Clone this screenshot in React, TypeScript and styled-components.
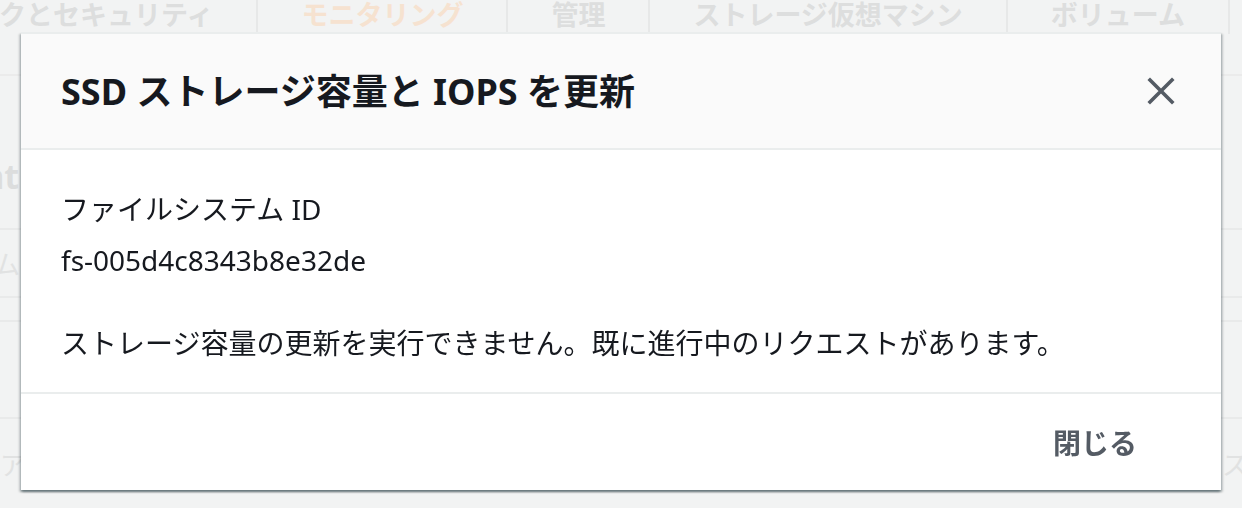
import * as React from "react";
import { FC } from "react";
import styled, { createGlobalStyle } from "styled-components";

const GlobalStyle = createGlobalStyle`
  html, body {
    margin: 0;
    padding: 0;
    width: 100%;
    height: 100%;
    overflow: hidden;
    background-color: #f2f3f3;
    font-family: "Noto Sans", "Noto Sans CJK JP", sans-serif;
  }
`;

/* 背景のページ（モーダルの後ろで薄く見えている部分） */
const Page = styled.div`
  width: 1242px;
  height: 508px;
  overflow: hidden;
  background-color: #f2f3f3;
`;

const TabBar = styled.div`
  display: flex;
  height: 76px;
  margin-left: -179px;
  border-bottom: 2px solid #ebebeb;
  box-sizing: border-box;
`;

const Tab = styled.div<{ active?: boolean }>`
  padding: 0 43px;
  height: 34px;
  line-height: 30px;
  font-size: 27px;
  font-weight: bold;
  white-space: nowrap;
  color: ${(p) => (p.active ? "#f6e2d0" : "#dddede")};
  border-right: 2px solid #e7e8e8;
`;

const SectionTitle = styled.div`
  display: flex;
  justify-content: flex-end;
  width: 19px;
  margin-top: 80px;
  height: 40px;
  font-size: 34px;
  line-height: 40px;
  font-weight: bold;
  white-space: nowrap;
  color: #dcdddd;
`;

const BgRow = styled.div<{ size: number }>`
  height: ${(p) => p.size}px;
  border-top: 2px solid #e9eaea;
  display: flex;
  justify-content: space-between;
  align-items: center;
  font-size: 26px;
  color: #e1e2e2;
`;

const BgCell = styled.span<{ alignEnd?: boolean }>`
  display: flex;
  justify-content: ${(p) => (p.alignEnd ? "flex-end" : "flex-start")};
  width: 20px;
  white-space: nowrap;
`;

const Rows = styled.div`
  margin-top: 32px;
`;

/* モーダル */
const Overlay = styled.div`
  position: fixed;
  inset: 0;
  display: flex;
  justify-content: center;
  align-items: flex-start;
  padding-top: 32px;
`;

const Dialog = styled.div`
  width: 1200px;
  background-color: #fff;
  border-top: 2px solid #eaeded;
  box-shadow: 0 2px 2px 0 rgba(0, 28, 36, 0.38),
    2px 2px 2px 0 rgba(0, 28, 36, 0.18), -2px 2px 2px 0 rgba(0, 28, 36, 0.18);
`;

const DialogHeader = styled.div`
  display: flex;
  align-items: center;
  justify-content: space-between;
  height: 114px;
  padding: 0 44px 0 40px;
  background-color: #fafafa;
  border-bottom: 2px solid #eaeded;
`;

const Title = styled.h2`
  margin: 0 0 4px 0;
  font-size: 36px;
  font-weight: bold;
  color: #16191f;
`;

const CloseButton = styled.button`
  width: 32px;
  height: 32px;
  padding: 0;
  border: none;
  background: none;
  display: flex;
  align-items: center;
  justify-content: center;
  cursor: pointer;
`;

const DialogBody = styled.div`
  padding: 37px 40px 27px 40px;
  color: #16191f;
  font-size: 28px;
`;

const Label = styled.div`
  line-height: 44px;
  margin-bottom: 7px;
`;

const Value = styled.div`
  line-height: 44px;
`;

const Message = styled.p`
  margin: 39px 0 0 0;
  line-height: 44px;
`;

const DialogFooter = styled.div`
  display: flex;
  justify-content: flex-end;
  align-items: center;
  height: 96px;
  padding: 0 44px;
  border-top: 2px solid #eaeded;
`;

const LinkButton = styled.button`
  padding: 0 40px;
  border: none;
  background: none;
  font-family: inherit;
  font-size: 28px;
  font-weight: bold;
  color: #545b64;
  cursor: pointer;
`;

const tabs = [
  { label: "ネットワークとセキュリティ", active: false },
  { label: "モニタリング", active: true },
  { label: "管理", active: false },
  { label: "ストレージ仮想マシン", active: false },
  { label: "ボリューム", active: false },
];

const CloseIcon: FC = () => (
  <svg width="28" height="28" viewBox="0 0 28 28">
    <path
      d="M3 3 L25 25 M25 3 L3 25"
      stroke="#545b64"
      strokeWidth="3.6"
      strokeLinecap="square"
      fill="none"
    />
  </svg>
);

const App: FC = () => {
  return (
    <>
      <GlobalStyle />
      <Page>
        <TabBar>
          {tabs.map((t) => (
            <Tab key={t.label} active={t.active}>
              {t.label}
            </Tab>
          ))}
        </TabBar>
        <SectionTitle>Management</SectionTitle>
        <Rows>
          <BgRow size={66}>
            <BgCell alignEnd>ネーム</BgCell>
          </BgRow>
          <BgRow size={22} />
          <BgRow size={95} />
          <BgRow size={90}>
            <BgCell>ア</BgCell>
            <BgCell>ス</BgCell>
          </BgRow>
        </Rows>
      </Page>
      <Overlay>
        <Dialog role="dialog">
          <DialogHeader>
            <Title>SSD ストレージ容量と IOPS を更新</Title>
            <CloseButton aria-label="閉じる">
              <CloseIcon />
            </CloseButton>
          </DialogHeader>
          <DialogBody>
            <Label>ファイルシステム ID</Label>
            <Value>fs-005d4c8343b8e32de</Value>
            <Message>
              ストレージ容量の更新を実行できません。既に進行中のリクエストがあります。
            </Message>
          </DialogBody>
          <DialogFooter>
            <LinkButton>閉じる</LinkButton>
          </DialogFooter>
        </Dialog>
      </Overlay>
    </>
  );
};

export default App;
